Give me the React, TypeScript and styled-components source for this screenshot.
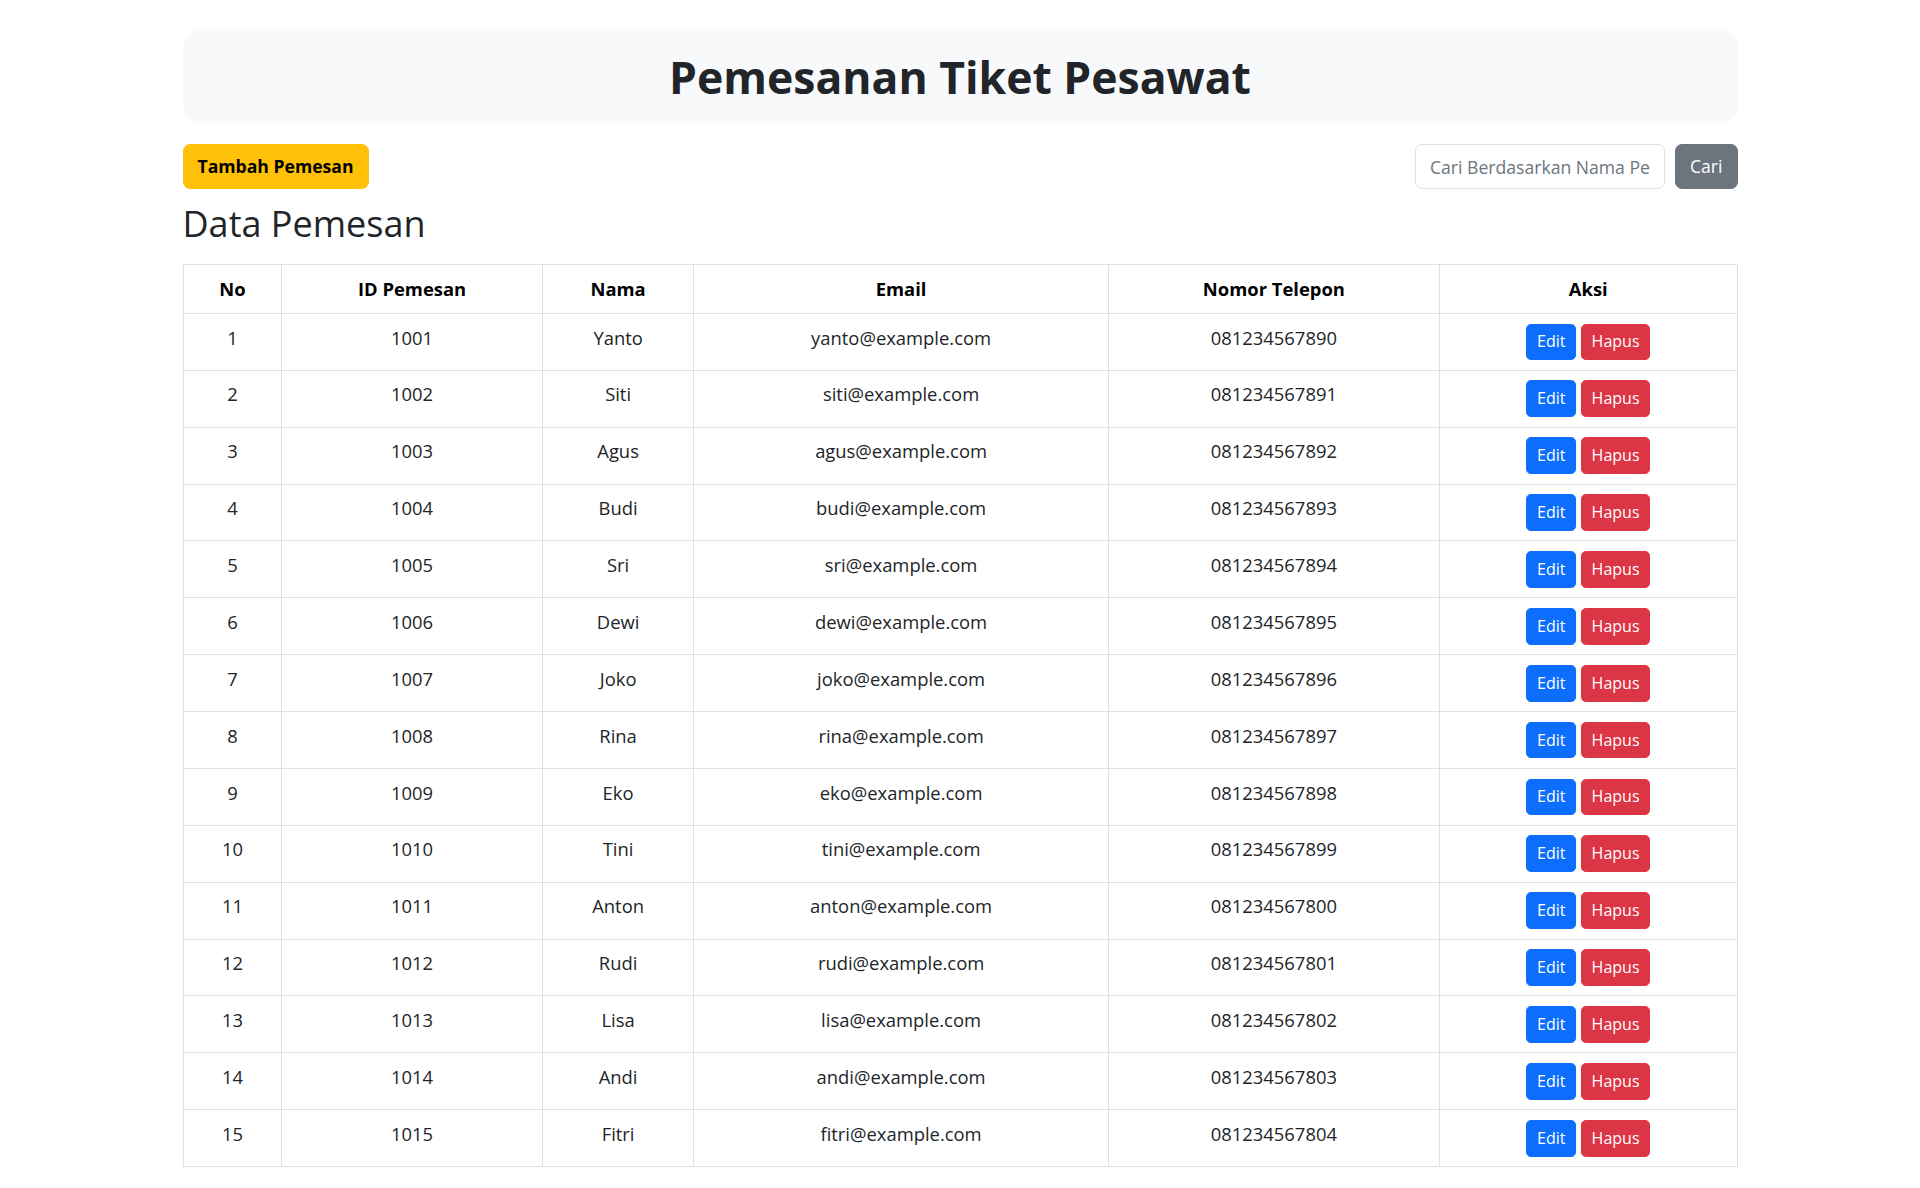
import React from 'react'
import styled, { createGlobalStyle } from 'styled-components'

const GlobalStyle = createGlobalStyle`
    body {
        margin: 0;
        background: #fff;
        color: #212529;
        font-family: 'Open Sans', 'Noto Sans', sans-serif;
        font-size: 18.4px;
        line-height: 28.8px;
    }
    * {
        box-sizing: border-box;
    }
`

const Container = styled.div`
    width: 1555px;
    margin: 0 auto;
    padding-top: 29px;
`

const Hero = styled.div`
    background: #f8f9fa;
    border-radius: 19px;
    padding: 19px;
    text-align: center;
`

const Title = styled.h1`
    margin: 0;
    font-size: 44.5px;
    font-weight: 700;
    line-height: 57px;
    color: #212529;
`

const Toolbar = styled.div`
    display: flex;
    justify-content: space-between;
    align-items: center;
    margin: 20px 0 12px;
`

const SearchForm = styled.form`
    display: flex;
    gap: 10px;
`

const Button = styled.button<{ $bg: string; $fg: string; $bold?: boolean }>`
    height: 45px;
    padding: 0 14px;
    border: 1px solid ${props => props.$bg};
    border-radius: 7px;
    background: ${props => props.$bg};
    color: ${props => props.$fg};
    font-family: inherit;
    font-size: 17.6px;
    font-weight: ${props => (props.$bold ? 700 : 400)};
    line-height: 1.5;
    cursor: pointer;
`

const SearchInput = styled.input`
    width: 250px;
    height: 45px;
    padding: 0 14px;
    border: 1px solid #dee2e6;
    border-radius: 7px;
    font-family: inherit;
    font-size: 17.6px;
    color: #212529;
    &::placeholder {
        color: #6c757d;
    }
`

const SectionTitle = styled.h2`
    margin: 0 0 17px;
    font-size: 36px;
    font-weight: 500;
    line-height: 46px;
`

const Table = styled.table`
    width: 100%;
    border-collapse: collapse;
    border: 1px solid #dee2e6;
    text-align: center;
`

const Th = styled.th<{ $width: number }>`
    width: ${props => props.$width}px;
    padding: 9.6px;
    border: 1px solid #dee2e6;
    font-weight: 700;
    color: #000;
    vertical-align: bottom;
`

const Td = styled.td`
    padding: 9.6px;
    border: 1px solid #dee2e6;
    vertical-align: top;
`

const Actions = styled.div`
    display: flex;
    justify-content: center;
    gap: 5px;
`

const SmallButton = styled.button<{ $bg: string }>`
    padding: 4.8px 9.6px;
    border: 1px solid ${props => props.$bg};
    border-radius: 4.8px;
    background: ${props => props.$bg};
    color: #fff;
    font-family: inherit;
    font-size: 16px;
    line-height: 25.1px;
    cursor: pointer;
`

const columns = [
    { label: 'No', width: 99 },
    { label: 'ID Pemesan', width: 261 },
    { label: 'Nama', width: 152 },
    { label: 'Email', width: 415 },
    { label: 'Nomor Telepon', width: 332 },
    { label: 'Aksi', width: 298 },
]

const names = ['Yanto', 'Siti', 'Agus', 'Budi', 'Sri', 'Dewi', 'Joko', 'Rina', 'Eko', 'Tini', 'Anton', 'Rudi', 'Lisa', 'Andi', 'Fitri']

const pemesan = names.map((nama, i) => ({
    no: i + 1,
    id: 1001 + i,
    nama,
    email: `${nama.toLowerCase()}@example.com`,
    telepon: `0812345678${String((90 + i) % 100).padStart(2, '0')}`,
}))

const App = () => {
    return (
        <>
            <GlobalStyle />
            <Container>
                <Hero>
                    <Title>Pemesanan Tiket Pesawat</Title>
                </Hero>
                <Toolbar>
                    <Button $bg="#ffc107" $fg="#000" $bold>
                        Tambah Pemesan
                    </Button>
                    <SearchForm onSubmit={e => e.preventDefault()}>
                        <SearchInput placeholder="Cari Berdasarkan Nama Pemesan" />
                        <Button $bg="#6c757d" $fg="#fff">
                            Cari
                        </Button>
                    </SearchForm>
                </Toolbar>
                <SectionTitle>Data Pemesan</SectionTitle>
                <Table>
                    <thead>
                        <tr>
                            {columns.map(col => (
                                <Th key={col.label} $width={col.width}>
                                    {col.label}
                                </Th>
                            ))}
                        </tr>
                    </thead>
                    <tbody>
                        {pemesan.map(p => (
                            <tr key={p.id}>
                                <Td>{p.no}</Td>
                                <Td>{p.id}</Td>
                                <Td>{p.nama}</Td>
                                <Td>{p.email}</Td>
                                <Td>{p.telepon}</Td>
                                <Td>
                                    <Actions>
                                        <SmallButton $bg="#0d6efd">Edit</SmallButton>
                                        <SmallButton $bg="#dc3545">Hapus</SmallButton>
                                    </Actions>
                                </Td>
                            </tr>
                        ))}
                    </tbody>
                </Table>
            </Container>
        </>
    )
}

export default App
